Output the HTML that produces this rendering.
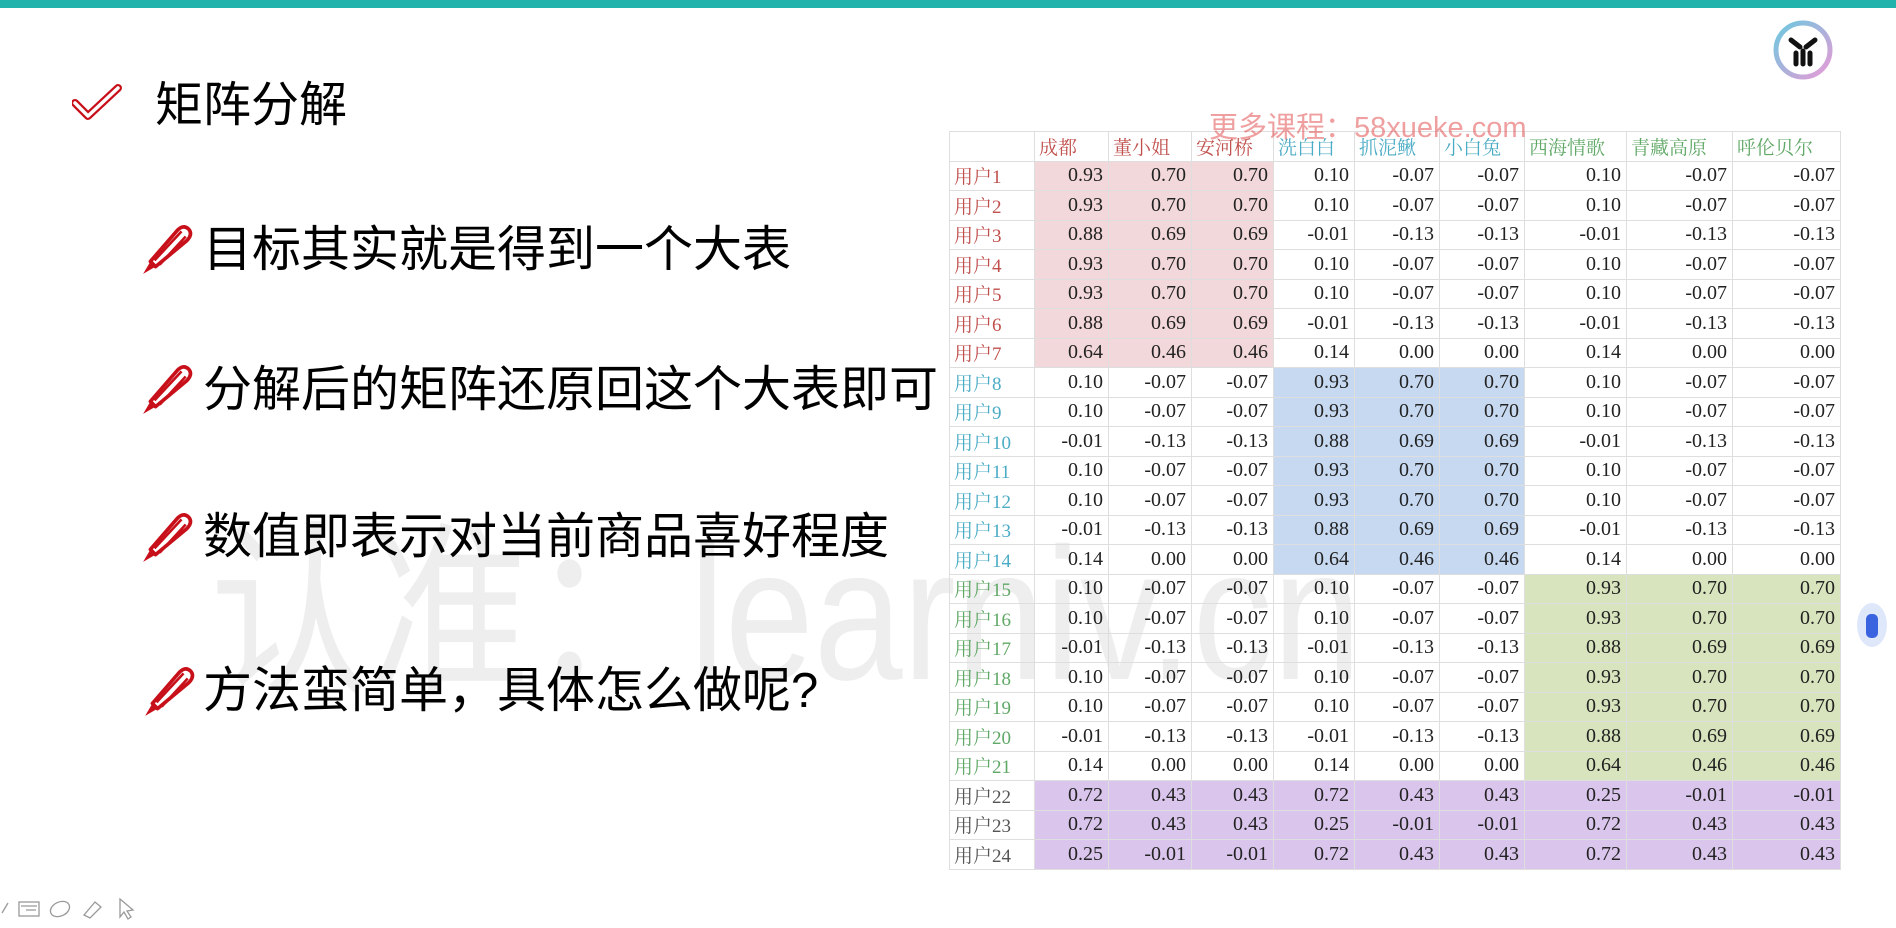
<!DOCTYPE html>
<html><head><meta charset="utf-8"><style>
body{margin:0;width:1896px;height:928px;background:#fff;position:relative;overflow:hidden;font-family:"Liberation Sans","Noto Sans CJK SC",sans-serif;}
.bar{position:absolute;left:0;top:0;width:1896px;height:8px;background:#22b3ad;}
.wm{position:absolute;left:210px;top:520px;font-size:188px;color:#eeeeee;white-space:nowrap;line-height:1;transform:scaleX(0.85);transform-origin:0 0;}
.t{position:absolute;color:#000;white-space:nowrap;line-height:1;}
.title{left:155px;top:82px;font-size:48px;}
.b{left:203px;font-size:49px;}
.ic{position:absolute;}
table{position:absolute;left:949px;top:131px;border-collapse:collapse;font-family:"Liberation Serif","Noto Serif CJK SC",serif;font-size:20px;table-layout:fixed;}
td{border:1px solid #dedede;height:28.5px;padding:0 5px;text-align:right;color:#222;white-space:nowrap;}
tr:first-child td{text-align:left;padding-left:4px;font-size:19px;}
td.l{text-align:left;padding-left:4px;font-size:19px;}
.r{color:#c0504d !important}.c{color:#4bacc6 !important}.g{color:#5fa866 !important}.k{color:#555 !important}
.p{background:#f2d8da}.u{background:#c7d9f0}.n{background:#d8e4bd}.v{background:#dac5ec}
.wm2{position:absolute;left:1209px;top:104px;font-size:29px;color:rgba(225,80,80,0.55);white-space:nowrap;}
</style></head><body>
<div class="bar"></div>
<div class="wm">认准：learniv.cn</div>
<svg class="ic" style="left:72px;top:83px" width="50" height="38" viewBox="0 0 50 38"><path d="M3 20 L16 33 L46 5" fill="none" stroke="#c8101a" stroke-width="8" stroke-linejoin="round" stroke-linecap="round"/><path d="M3 20 L16 33 L46 5" fill="none" stroke="#fff" stroke-width="3.5" stroke-linejoin="round" stroke-linecap="round"/></svg>
<div class="t title">矩阵分解</div>
<svg width="0" height="0" style="position:absolute"><defs><g id="pen"><path d="M10 38 L3 50 L15 43 Z" fill="#c8101a"/><path d="M10 38 L36 8 Q42 2 47 7 Q51 12 45 18 L15 43 Z" fill="#fff" stroke="#c8101a" stroke-width="3.5" stroke-linejoin="round"/><path d="M14 37 L40 9 M19 41 L44 14" stroke="#c8101a" stroke-width="2.5"/></g></defs></svg>
<svg class="ic" style="left:140px;top:222px" width="54" height="54" viewBox="0 0 52 52"><use href="#pen"/></svg>
<div class="t b" style="top:226px">目标其实就是得到一个大表</div>
<svg class="ic" style="left:140px;top:362px" width="54" height="54" viewBox="0 0 52 52"><use href="#pen"/></svg>
<div class="t b" style="top:366px">分解后的矩阵还原回这个大表即可</div>
<svg class="ic" style="left:140px;top:510px" width="54" height="54" viewBox="0 0 52 52"><use href="#pen"/></svg>
<div class="t b" style="top:513px">数值即表示对当前商品喜好程度</div>
<svg class="ic" style="left:142px;top:664px" width="54" height="54" viewBox="0 0 52 52"><use href="#pen"/></svg>
<div class="t b" style="top:667px">方法蛮简单，具体怎么做呢?</div>
<svg class="ic" style="left:1772px;top:19px" width="62" height="62" viewBox="0 0 62 62"><defs><linearGradient id="lg" x1="0" y1="0" x2="1" y2="1"><stop offset="0" stop-color="#6cc9e0"/><stop offset="1" stop-color="#e79ad6"/></linearGradient></defs><circle cx="31" cy="31" r="27" fill="#fff" stroke="url(#lg)" stroke-width="5"/><path d="M19 21 L28 28 M43 21 L34 28 M31 32 L31 45 M24 34 L24 45 M38 34 L38 45" stroke="#111" stroke-width="5" stroke-linecap="round"/></svg>
<table>
<colgroup><col style="width:85px"><col style="width:74px"><col style="width:83px"><col style="width:82px"><col style="width:81px"><col style="width:85px"><col style="width:85px"><col style="width:102px"><col style="width:106px"><col style="width:108px"></colgroup>
<tr><td></td><td class="r">成都</td><td class="r">董小姐</td><td class="r">安河桥</td><td class="c">洗白白</td><td class="c">抓泥鳅</td><td class="c">小白兔</td><td class="g">西海情歌</td><td class="g">青藏高原</td><td class="g">呼伦贝尔</td></tr>
<tr><td class="l r">用户1</td><td class="p">0.93</td><td class="p">0.70</td><td class="p">0.70</td><td>0.10</td><td>-0.07</td><td>-0.07</td><td>0.10</td><td>-0.07</td><td>-0.07</td></tr>
<tr><td class="l r">用户2</td><td class="p">0.93</td><td class="p">0.70</td><td class="p">0.70</td><td>0.10</td><td>-0.07</td><td>-0.07</td><td>0.10</td><td>-0.07</td><td>-0.07</td></tr>
<tr><td class="l r">用户3</td><td class="p">0.88</td><td class="p">0.69</td><td class="p">0.69</td><td>-0.01</td><td>-0.13</td><td>-0.13</td><td>-0.01</td><td>-0.13</td><td>-0.13</td></tr>
<tr><td class="l r">用户4</td><td class="p">0.93</td><td class="p">0.70</td><td class="p">0.70</td><td>0.10</td><td>-0.07</td><td>-0.07</td><td>0.10</td><td>-0.07</td><td>-0.07</td></tr>
<tr><td class="l r">用户5</td><td class="p">0.93</td><td class="p">0.70</td><td class="p">0.70</td><td>0.10</td><td>-0.07</td><td>-0.07</td><td>0.10</td><td>-0.07</td><td>-0.07</td></tr>
<tr><td class="l r">用户6</td><td class="p">0.88</td><td class="p">0.69</td><td class="p">0.69</td><td>-0.01</td><td>-0.13</td><td>-0.13</td><td>-0.01</td><td>-0.13</td><td>-0.13</td></tr>
<tr><td class="l r">用户7</td><td class="p">0.64</td><td class="p">0.46</td><td class="p">0.46</td><td>0.14</td><td>0.00</td><td>0.00</td><td>0.14</td><td>0.00</td><td>0.00</td></tr>
<tr><td class="l c">用户8</td><td>0.10</td><td>-0.07</td><td>-0.07</td><td class="u">0.93</td><td class="u">0.70</td><td class="u">0.70</td><td>0.10</td><td>-0.07</td><td>-0.07</td></tr>
<tr><td class="l c">用户9</td><td>0.10</td><td>-0.07</td><td>-0.07</td><td class="u">0.93</td><td class="u">0.70</td><td class="u">0.70</td><td>0.10</td><td>-0.07</td><td>-0.07</td></tr>
<tr><td class="l c">用户10</td><td>-0.01</td><td>-0.13</td><td>-0.13</td><td class="u">0.88</td><td class="u">0.69</td><td class="u">0.69</td><td>-0.01</td><td>-0.13</td><td>-0.13</td></tr>
<tr><td class="l c">用户11</td><td>0.10</td><td>-0.07</td><td>-0.07</td><td class="u">0.93</td><td class="u">0.70</td><td class="u">0.70</td><td>0.10</td><td>-0.07</td><td>-0.07</td></tr>
<tr><td class="l c">用户12</td><td>0.10</td><td>-0.07</td><td>-0.07</td><td class="u">0.93</td><td class="u">0.70</td><td class="u">0.70</td><td>0.10</td><td>-0.07</td><td>-0.07</td></tr>
<tr><td class="l c">用户13</td><td>-0.01</td><td>-0.13</td><td>-0.13</td><td class="u">0.88</td><td class="u">0.69</td><td class="u">0.69</td><td>-0.01</td><td>-0.13</td><td>-0.13</td></tr>
<tr><td class="l c">用户14</td><td>0.14</td><td>0.00</td><td>0.00</td><td class="u">0.64</td><td class="u">0.46</td><td class="u">0.46</td><td>0.14</td><td>0.00</td><td>0.00</td></tr>
<tr><td class="l g">用户15</td><td>0.10</td><td>-0.07</td><td>-0.07</td><td>0.10</td><td>-0.07</td><td>-0.07</td><td class="n">0.93</td><td class="n">0.70</td><td class="n">0.70</td></tr>
<tr><td class="l g">用户16</td><td>0.10</td><td>-0.07</td><td>-0.07</td><td>0.10</td><td>-0.07</td><td>-0.07</td><td class="n">0.93</td><td class="n">0.70</td><td class="n">0.70</td></tr>
<tr><td class="l g">用户17</td><td>-0.01</td><td>-0.13</td><td>-0.13</td><td>-0.01</td><td>-0.13</td><td>-0.13</td><td class="n">0.88</td><td class="n">0.69</td><td class="n">0.69</td></tr>
<tr><td class="l g">用户18</td><td>0.10</td><td>-0.07</td><td>-0.07</td><td>0.10</td><td>-0.07</td><td>-0.07</td><td class="n">0.93</td><td class="n">0.70</td><td class="n">0.70</td></tr>
<tr><td class="l g">用户19</td><td>0.10</td><td>-0.07</td><td>-0.07</td><td>0.10</td><td>-0.07</td><td>-0.07</td><td class="n">0.93</td><td class="n">0.70</td><td class="n">0.70</td></tr>
<tr><td class="l g">用户20</td><td>-0.01</td><td>-0.13</td><td>-0.13</td><td>-0.01</td><td>-0.13</td><td>-0.13</td><td class="n">0.88</td><td class="n">0.69</td><td class="n">0.69</td></tr>
<tr><td class="l g">用户21</td><td>0.14</td><td>0.00</td><td>0.00</td><td>0.14</td><td>0.00</td><td>0.00</td><td class="n">0.64</td><td class="n">0.46</td><td class="n">0.46</td></tr>
<tr><td class="l k">用户22</td><td class="v">0.72</td><td class="v">0.43</td><td class="v">0.43</td><td class="v">0.72</td><td class="v">0.43</td><td class="v">0.43</td><td class="v">0.25</td><td class="v">-0.01</td><td class="v">-0.01</td></tr>
<tr><td class="l k">用户23</td><td class="v">0.72</td><td class="v">0.43</td><td class="v">0.43</td><td class="v">0.25</td><td class="v">-0.01</td><td class="v">-0.01</td><td class="v">0.72</td><td class="v">0.43</td><td class="v">0.43</td></tr>
<tr><td class="l k">用户24</td><td class="v">0.25</td><td class="v">-0.01</td><td class="v">-0.01</td><td class="v">0.72</td><td class="v">0.43</td><td class="v">0.43</td><td class="v">0.72</td><td class="v">0.43</td><td class="v">0.43</td></tr>
</table>
<div class="wm2">更多课程：58xueke.com</div>
<svg class="ic" style="left:1855px;top:600px" width="34" height="50" viewBox="0 0 34 50"><ellipse cx="17" cy="25" rx="15" ry="22" fill="#dfe7fb"/><rect x="11" y="14" width="12" height="24" rx="5" fill="#3a63e0"/></svg>
<svg class="ic" style="left:0;top:893px" width="140" height="28" viewBox="0 0 140 28" fill="none" stroke="#999" stroke-width="1.3"><path d="M2 20 L8 10"/><rect x="19" y="9" width="20" height="14"/><path d="M21 13h16M26 17h10"/><ellipse cx="60" cy="16" rx="10" ry="7" transform="rotate(-25 60 16)"/><path d="M84 22 L95 9 L101 14 L90 25 Z"/><path d="M120 6 L120 24 L124 19 L128 26 L131 24 L127 18 L133 17 Z"/></svg>
</body></html>
